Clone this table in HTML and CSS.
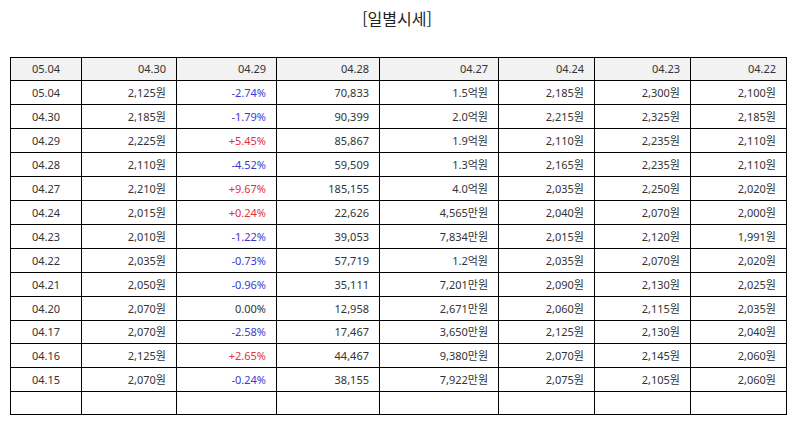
FILE: index.html
```html
<!DOCTYPE html>
<html lang="ko">
<head>
<meta charset="utf-8">
<title>일별시세</title>
<link rel="stylesheet" href="styles.css">
</head>
<body>
<div class="page">
  <h1 class="title">[일별시세]</h1>
  <table class="grid">
    <colgroup>
      <col class="c1"><col class="c2"><col class="c3"><col class="c4"><col class="c5"><col class="c6"><col class="c7"><col class="c8">
    </colgroup>
    <thead>
      <tr class="short"><th class="date">05.04</th><th>04.30</th><th>04.29</th><th>04.28</th><th>04.27</th><th>04.24</th><th>04.23</th><th>04.22</th></tr>
    </thead>
    <tbody>
      <tr><td class="date">05.04</td><td>2,125원</td><td class="dn">-2.74%</td><td>70,833</td><td>1.5억원</td><td>2,185원</td><td>2,300원</td><td>2,100원</td></tr>
      <tr><td class="date">04.30</td><td>2,185원</td><td class="dn">-1.79%</td><td>90,399</td><td>2.0억원</td><td>2,215원</td><td>2,325원</td><td>2,185원</td></tr>
      <tr><td class="date">04.29</td><td>2,225원</td><td class="up">+5.45%</td><td>85,867</td><td>1.9억원</td><td>2,110원</td><td>2,235원</td><td>2,110원</td></tr>
      <tr><td class="date">04.28</td><td>2,110원</td><td class="dn">-4.52%</td><td>59,509</td><td>1.3억원</td><td>2,165원</td><td>2,235원</td><td>2,110원</td></tr>
      <tr><td class="date">04.27</td><td>2,210원</td><td class="up">+9.67%</td><td>185,155</td><td>4.0억원</td><td>2,035원</td><td>2,250원</td><td>2,020원</td></tr>
      <tr><td class="date">04.24</td><td>2,015원</td><td class="up">+0.24%</td><td>22,626</td><td>4,565만원</td><td>2,040원</td><td>2,070원</td><td>2,000원</td></tr>
      <tr><td class="date">04.23</td><td>2,010원</td><td class="dn">-1.22%</td><td>39,053</td><td>7,834만원</td><td>2,015원</td><td>2,120원</td><td>1,991원</td></tr>
      <tr><td class="date">04.22</td><td>2,035원</td><td class="dn">-0.73%</td><td>57,719</td><td>1.2억원</td><td>2,035원</td><td>2,070원</td><td>2,020원</td></tr>
      <tr><td class="date">04.21</td><td>2,050원</td><td class="dn">-0.96%</td><td>35,111</td><td>7,201만원</td><td>2,090원</td><td>2,130원</td><td>2,025원</td></tr>
      <tr><td class="date">04.20</td><td>2,070원</td><td>0.00%</td><td>12,958</td><td>2,671만원</td><td>2,060원</td><td>2,115원</td><td>2,035원</td></tr>
      <tr class="short"><td class="date">04.17</td><td>2,070원</td><td class="dn">-2.58%</td><td>17,467</td><td>3,650만원</td><td>2,125원</td><td>2,130원</td><td>2,040원</td></tr>
      <tr><td class="date">04.16</td><td>2,125원</td><td class="up">+2.65%</td><td>44,467</td><td>9,380만원</td><td>2,070원</td><td>2,145원</td><td>2,060원</td></tr>
      <tr><td class="date">04.15</td><td>2,070원</td><td class="dn">-0.24%</td><td>38,155</td><td>7,922만원</td><td>2,075원</td><td>2,105원</td><td>2,060원</td></tr>
      <tr class="short"><td class="date"></td><td></td><td></td><td></td><td></td><td></td><td></td><td></td></tr>
    </tbody>
  </table>
</div>
</body>
</html>
```

FILE: styles.css
```css
html, body {
  margin: 0;
  padding: 0;
  background: #ffffff;
}

.page {
  width: 794px;
  padding: 6px 0 0 10px;
  box-sizing: border-box;
  font-family: "Noto Sans", "Noto Sans CJK KR", sans-serif;
  color: #222222;
}

.title {
  margin: 0 0 27px 0;
  padding-right: 10px;
  text-align: center;
  font-family: "Noto Sans CJK KR", "Noto Sans", sans-serif;
  font-weight: 400;
  font-size: 16px;
  line-height: 24px;
  color: #222222;
}

.grid {
  border-collapse: collapse;
  table-layout: fixed;
  width: 777px;
  font-size: 11px;
}

.c1 { width: 71px; }
.c2 { width: 95px; }
.c3 { width: 100px; }
.c4 { width: 103px; }
.c5 { width: 119px; }
.c6 { width: 96px; }
.c7 { width: 96px; }
.c8 { width: 96px; }

.grid tr {
  height: 24px;
}

.grid tr.short {
  height: 23px;
}

.grid th,
.grid td {
  border: 1px solid #000000;
  padding: 0 10px 0 4px;
  text-align: right;
  font-weight: 400;
  color: #333333;
  white-space: nowrap;
  line-height: 14px;
}

.grid th {
  background: #f2f2f2;
}

.grid .date {
  text-align: center;
  padding: 0;
}

.grid .dn { color: #3a3ad0; }
.grid .up { color: #e0303a; }
```
